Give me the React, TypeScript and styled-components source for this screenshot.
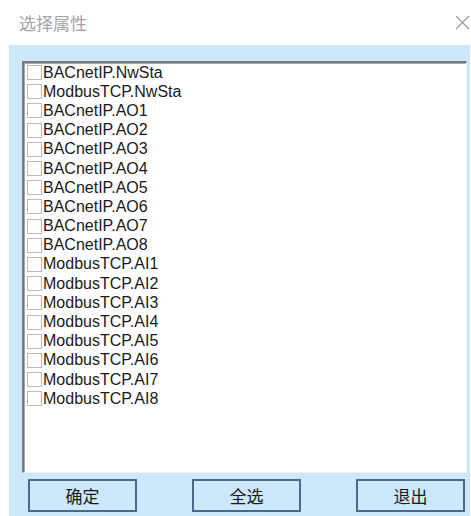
import styled, { createGlobalStyle } from 'styled-components';

const GlobalStyle = createGlobalStyle`
  html, body {
    margin: 0;
    padding: 0;
    background: #ffffff;
  }
  body {
    width: 471px;
    height: 516px;
    overflow: hidden;
    font-family: Tahoma, "Liberation Sans", "Noto Sans CJK SC", sans-serif;
  }
`;

const properties = [
  'BACnetIP.NwSta',
  'ModbusTCP.NwSta',
  'BACnetIP.AO1',
  'BACnetIP.AO2',
  'BACnetIP.AO3',
  'BACnetIP.AO4',
  'BACnetIP.AO5',
  'BACnetIP.AO6',
  'BACnetIP.AO7',
  'BACnetIP.AO8',
  'ModbusTCP.AI1',
  'ModbusTCP.AI2',
  'ModbusTCP.AI3',
  'ModbusTCP.AI4',
  'ModbusTCP.AI5',
  'ModbusTCP.AI6',
  'ModbusTCP.AI7',
  'ModbusTCP.AI8',
];

function App() {
  return (
    <>
      <GlobalStyle />
      <Dialog>
        <TitleBar>
          <Title>选择属性</Title>
          <CloseButton type="button" aria-label="close">
            <svg width="15" height="15" viewBox="0 0 15 15">
              <path d="M1 1 L14 14 M14 1 L1 14" stroke="#9a9a9a" strokeWidth="1.2" fill="none" />
            </svg>
          </CloseButton>
        </TitleBar>

        <Body>
          <ListBox>
            {properties.map((name) => (
              <Row key={name}>
                <Check />
                <Label>{name}</Label>
              </Row>
            ))}
          </ListBox>

          <ButtonRow>
            <Button type="button">确定</Button>
            <Button type="button">全选</Button>
            <Button type="button">退出</Button>
          </ButtonRow>
        </Body>
      </Dialog>
    </>
  );
}

const Dialog = styled.div`
  width: 471px;
  height: 516px;
  display: flex;
  flex-direction: column;
  background: #ffffff;
`;

const TitleBar = styled.div`
  height: 45px;
  display: flex;
  align-items: center;
  justify-content: space-between;
  padding: 0 1px 0 19px;
  box-sizing: border-box;
`;

const Title = styled.div`
  font-family: "Noto Sans CJK SC", sans-serif;
  font-size: 17px;
  color: #a4a4a4;
  margin-top: -1px;
`;

const CloseButton = styled.button`
  background: transparent;
  border: none;
  padding: 0;
  width: 16px;
  height: 16px;
  display: flex;
  align-items: center;
  justify-content: center;
`;

const Body = styled.div`
  flex: 1;
  margin-left: 9px;
  width: 461px;
  background: #cde8fb;
  padding: 16px 3px 0 13px;
  box-sizing: border-box;
  display: flex;
  flex-direction: column;
`;

const ListBox = styled.div`
  height: 412px;
  background: #ffffff;
  box-sizing: border-box;
  border-top: 2px solid #7a7a7a;
  border-left: 2px solid #7a7a7a;
  border-right: 1px solid #eef3f7;
  border-bottom: 1px solid #eef3f7;
  box-shadow: inset 1px 1px 0 #a8a8a8;
  padding: 0 0 0 3px;
  display: flex;
  flex-direction: column;
`;

const Row = styled.div`
  height: 19.2px;
  display: flex;
  align-items: center;
`;

const Check = styled.span`
  width: 13px;
  height: 13px;
  border: 1px solid #bcbcbc;
  background: #ffffff;
  margin-right: 1px;
  flex-shrink: 0;
`;

const Label = styled.span`
  font-size: 16px;
  color: #1a1a1a;
  line-height: 18px;
`;

const ButtonRow = styled.div`
  display: flex;
  justify-content: space-between;
  padding: 6px 2px 0 6px;
`;

const Button = styled.button`
  width: 109px;
  height: 33px;
  box-sizing: border-box;
  background: #cde8fb;
  border: 2px solid #4a6a88;
  border-radius: 0;
  font-family: "Noto Sans CJK SC", sans-serif;
  font-size: 17px;
  color: #1a1a1a;
  padding: 0;
`;

export default App;
